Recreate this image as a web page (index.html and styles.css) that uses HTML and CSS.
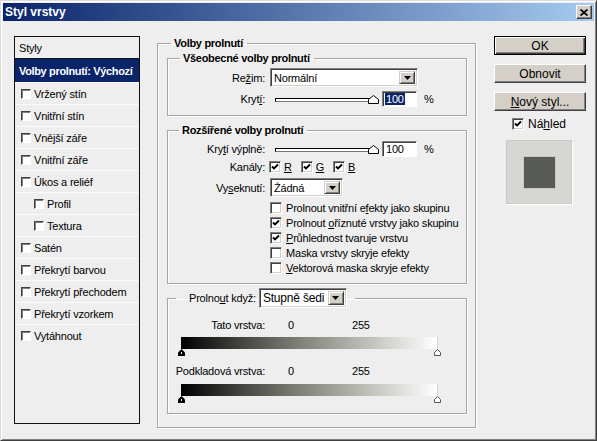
FILE: index.html
```html
<!DOCTYPE html>
<html lang="cs">
<head>
<meta charset="utf-8">
<title>Styl vrstvy</title>
<link rel="stylesheet" href="styles.css">
</head>
<body>
<div class="window">
  <div class="titlebar">
    <span class="title">Styl vrstvy</span>
    <span class="close"><svg width="8" height="7" viewBox="0 0 8 7"><path d="M0.5 0.5L7.5 6.5M7.5 0.5L0.5 6.5" stroke="#000" stroke-width="1.8" fill="none"/></svg></span>
  </div>
  <div class="body">
    <div class="list">
      <div class="lhead">Styly</div>
      <div class="lsel">Volby prolnutí: Výchozí</div>
      <div class="litem"><span class="lcb"></span><span>Vržený stín</span></div>
      <div class="litem"><span class="lcb"></span><span>Vnitřní stín</span></div>
      <div class="litem"><span class="lcb"></span><span>Vnější záře</span></div>
      <div class="litem"><span class="lcb"></span><span>Vnitřní záře</span></div>
      <div class="litem"><span class="lcb"></span><span>Úkos a reliéf</span></div>
      <div class="litem sub"><span class="lcb"></span><span>Profil</span></div>
      <div class="litem sub"><span class="lcb"></span><span>Textura</span></div>
      <div class="litem"><span class="lcb"></span><span>Satén</span></div>
      <div class="litem"><span class="lcb"></span><span>Překrytí barvou</span></div>
      <div class="litem"><span class="lcb"></span><span>Překrytí přechodem</span></div>
      <div class="litem"><span class="lcb"></span><span>Překrytí vzorkem</span></div>
      <div class="litem"><span class="lcb"></span><span>Vytáhnout</span></div>
    </div>

    <fieldset class="grp outer">
      <legend class="lg-outer">Volby prolnutí</legend>
      <div class="outer-in">
        <fieldset class="grp g1">
          <legend class="lg-1">Všeobecné volby prolnutí</legend>
          <div class="frow r-mode">
            <span class="lbl">Re<u>ž</u>im:</span>
            <div class="select s-mode"><span class="val">Normální</span><span class="arrow"><svg width="7" height="4" viewBox="0 0 7 4"><path d="M0 0H7L3.5 4Z"/></svg></span></div>
          </div>
          <div class="frow r-num">
            <span class="lbl">Kryt<u>í</u>:</span>
            <div class="slider"><div class="track"></div><svg class="thumb" width="11" height="9" viewBox="0 0 11 9"><path d="M0.5 8.5V4.5L5.5 0.5L10.5 4.5V8.5Z" fill="#fff" stroke="#000"/></svg></div>
            <div class="num sel"><span>100</span></div>
            <span class="pct">%</span>
          </div>
        </fieldset>

        <fieldset class="grp g2">
          <legend class="lg-2">Rozšířené volby prolnutí</legend>
          <div class="frow r-num r-fill">
            <span class="lbl">Kry<u>t</u>í výplně:</span>
            <div class="slider"><div class="track"></div><svg class="thumb" width="11" height="9" viewBox="0 0 11 9"><path d="M0.5 8.5V4.5L5.5 0.5L10.5 4.5V8.5Z" fill="#fff" stroke="#000"/></svg></div>
            <div class="num"><span>100</span></div>
            <span class="pct">%</span>
          </div>
          <div class="frow r-ch">
            <span class="lbl">Kanály:</span>
            <div class="chans">
              <span class="cb on"><svg width="8" height="8" viewBox="0 0 8 8"><path d="M1 3.5L3 5.5L7 1.5" stroke="#000" stroke-width="1.9" fill="none"/></svg></span><u class="ch">R</u>
              <span class="cb on"><svg width="8" height="8" viewBox="0 0 8 8"><path d="M1 3.5L3 5.5L7 1.5" stroke="#000" stroke-width="1.9" fill="none"/></svg></span><u class="ch">G</u>
              <span class="cb on"><svg width="8" height="8" viewBox="0 0 8 8"><path d="M1 3.5L3 5.5L7 1.5" stroke="#000" stroke-width="1.9" fill="none"/></svg></span><u class="ch">B</u>
            </div>
          </div>
          <div class="frow r-knock">
            <span class="lbl">Vy<u>s</u>eknutí:</span>
            <div class="select s-knock"><span class="val">Žádná</span><span class="arrow"><svg width="7" height="4" viewBox="0 0 7 4"><path d="M0 0H7L3.5 4Z"/></svg></span></div>
          </div>
          <div class="opts">
            <div class="opt"><span class="cb"></span><span>Prolnout vnitřní e<u>f</u>ekty jako skupinu</span></div>
            <div class="opt"><span class="cb on"><svg width="8" height="8" viewBox="0 0 8 8"><path d="M1 3.5L3 5.5L7 1.5" stroke="#000" stroke-width="1.9" fill="none"/></svg></span><span>Prolnout <u>o</u>říznuté vrstvy jako skupinu</span></div>
            <div class="opt"><span class="cb on"><svg width="8" height="8" viewBox="0 0 8 8"><path d="M1 3.5L3 5.5L7 1.5" stroke="#000" stroke-width="1.9" fill="none"/></svg></span><span><u>P</u>růhlednost tvaruje vrstvu</span></div>
            <div class="opt"><span class="cb"></span><span>Maska vrstvy skryje efekty</span></div>
            <div class="opt"><span class="cb"></span><span><u>V</u>ektorová maska skryje efekty</span></div>
          </div>
        </fieldset>

        <fieldset class="grp g3">
          <legend class="lg-3"><span class="lg3-in"><span class="lg3-lbl">Prolno<u>u</u>t když:</span><span class="select s-if"><span class="val">Stupně šedi</span><span class="arrow"><svg width="7" height="4" viewBox="0 0 7 4"><path d="M0 0H7L3.5 4Z"/></svg></span></span></span></legend>
          <div class="grow g-first">
            <span class="lbl">Tato vrstva:</span><span class="v0">0</span><span>255</span>
          </div>
          <div class="gbar"></div>
          <div class="gthumbs">
            <svg width="7" height="7" viewBox="0 0 7 7"><path d="M3.5 0L7 3.5V7H0V3.5Z"/><rect x="3" y="3" width="1" height="2" fill="#fff"/></svg>
            <svg width="7" height="7" viewBox="0 0 7 7"><path d="M3.5 0.5L6.5 3.5V6.5H0.5V3.5Z" fill="#fff" stroke="#555"/></svg>
          </div>
          <div class="grow g-second">
            <span class="lbl">Podkladová vrstva:</span><span class="v0">0</span><span>255</span>
          </div>
          <div class="gbar gbar2"></div>
          <div class="gthumbs">
            <svg width="7" height="7" viewBox="0 0 7 7"><path d="M3.5 0L7 3.5V7H0V3.5Z"/><rect x="3" y="3" width="1" height="2" fill="#fff"/></svg>
            <svg width="7" height="7" viewBox="0 0 7 7"><path d="M3.5 0.5L6.5 3.5V6.5H0.5V3.5Z" fill="#fff" stroke="#555"/></svg>
          </div>
        </fieldset>
      </div>
    </fieldset>

    <div class="side">
      <div class="btn def">OK</div>
      <div class="btn">Obnovit</div>
      <div class="btn"><span><u>N</u>ový styl...</span></div>
      <div class="prevchk"><span class="cb on"><svg width="8" height="8" viewBox="0 0 8 8"><path d="M1 3.5L3 5.5L7 1.5" stroke="#000" stroke-width="1.9" fill="none"/></svg></span><span class="pl">Ná<u>h</u>led</span></div>
      <div class="preview"><div class="sq"></div></div>
    </div>
  </div>
</div>
</body>
</html>
```
FILE: styles.css
```css
* { box-sizing: border-box; }
html, body { margin: 0; padding: 0; }
body {
  background: #eeeeee;
  font-family: "Liberation Sans", Arial, sans-serif;
  font-size: 11px;
  letter-spacing: -0.2px;
  color: #000;
}
u { text-decoration: underline; text-underline-offset: 1px; }

.window {
  width: 597px;
  height: 441px;
  border: 1px solid;
  border-color: #dcdcdc #404040 #404040 #dcdcdc;
  box-shadow: inset 1px 1px 0 #fff, inset -1px -1px 0 #808080;
  padding: 2px;
  background: #eeeeee;
  display: flex;
  flex-direction: column;
  overflow: hidden;
}

.titlebar {
  height: 18px;
  flex: none;
  display: flex;
  align-items: center;
  background: linear-gradient(to right, #0a246a, #a6caf0);
  padding: 0 2px 0 2px;
}
.title { color: #fff; font-weight: bold; font-size: 12px; letter-spacing: 0; }
.close {
  margin-left: auto;
  width: 16px;
  height: 14px;
  background: #d4d0c8;
  border: 1px solid;
  border-color: #fff #404040 #404040 #fff;
  box-shadow: inset -1px -1px 0 #808080;
  display: flex;
  align-items: center;
  justify-content: center;
}

.body {
  flex: 1;
  display: flex;
  align-items: flex-start;
  padding: 15px 0 0 11px;
}

/* left style list */
.list {
  width: 126px;
  height: 388px;
  border: 1px solid #111;
  flex: none;
}
.lhead {
  height: 22px;
  border-bottom: 1px solid #111;
  display: flex;
  align-items: center;
  padding-left: 4px;
}
.lsel {
  height: 23px;
  display: flex;
  align-items: center;
  padding-left: 4px;
  background: #0a246a;
  color: #fff;
  font-weight: bold;
  letter-spacing: -0.35px;
  white-space: nowrap;
}
.litem {
  height: 22px;
  border-top: 1px solid #fbfbfb;
  display: flex;
  align-items: center;
  padding-left: 6px;
  white-space: nowrap;
}
.litem.sub { padding-left: 19px; }
.lcb {
  width: 10px;
  height: 10px;
  margin-right: 3px;
  background: #fff;
  border: 1px solid;
  border-color: #404040 #fff #fff #404040;
  box-shadow: inset 1px 1px 0 #808080;
  flex: none;
}

/* group boxes */
fieldset.grp {
  margin: 0;
  padding: 0;
  min-width: 0;
  border: 1px solid #a5a5a5;
  box-shadow: 1px 1px 0 #fff, inset 1px 1px 0 #fff;
}
fieldset.grp > legend {
  font-weight: bold;
  letter-spacing: -0.3px;
  line-height: 13px;
  padding: 0 4px 0 3px;
  white-space: nowrap;
}
fieldset.outer {
  width: 319px;
  margin: 1px 0 0 17px;
  flex: none;
}
.lg-outer { margin-left: 13px; }
.outer-in { padding: 0 8px 13px 9px; }

fieldset.g1 { margin-top: 2px; padding-bottom: 8px; }
.lg-1 { margin-left: 12px; }
fieldset.g2 { margin-top: 8px; padding-bottom: 8px; }
.lg-2 { margin-left: 11px; }
fieldset.g3 { margin-top: 4px; padding-bottom: 10px; }
fieldset.grp > legend.lg-3 { margin-left: 8px; padding: 0 8px 0 13px; font-weight: normal; letter-spacing: -0.2px; }
.lg3-in { display: flex; align-items: center; gap: 3px; }

.frow { display: flex; align-items: center; }
.lbl {
  width: 97px;
  text-align: right;
  flex: none;
  white-space: nowrap;
}
.r-mode { margin-top: 3px; height: 19px; }
.r-mode .select { margin-left: 5px; width: 148px; }
.r-num { margin-top: 4px; height: 16px; }
.r-ch { margin-top: 3px; height: 14px; }
.r-knock { margin-top: 4px; height: 19px; }
.r-knock .select { margin-left: 5px; width: 73px; }

.select {
  display: flex;
  align-items: stretch;
  height: 19px;
  background: #fff;
  border: 1px solid;
  border-color: #808080 #fff #fff #808080;
  box-shadow: inset 1px 1px 0 #404040, inset -1px -1px 0 #d4d0c8;
  padding: 2px;
}
.select .val { flex: 1; display: flex; align-items: center; padding-left: 1px; white-space: nowrap; }
.arrow {
  width: 16px;
  flex: none;
  background: #d4d0c8;
  border: 1px solid;
  border-color: #d4d0c8 #404040 #404040 #d4d0c8;
  box-shadow: inset 1px 1px 0 #fff, inset -1px -1px 0 #808080;
  display: flex;
  align-items: center;
  justify-content: center;
}
.s-if { width: 88px; height: 20px; font-weight: normal; font-size: 12px; letter-spacing: -0.2px; }

.slider {
  position: relative;
  width: 107px;
  height: 16px;
  margin-left: 10px;
  display: flex;
  align-items: center;
}
.track {
  width: 102px;
  height: 4px;
  margin-top: 2px;
  background: #fff;
  border: 1px solid #000;
  border-bottom-color: #777;
}
.thumb { position: absolute; left: 93px; top: 4px; }

.num {
  width: 35px;
  height: 16px;
  background: #fff;
  border: 1px solid;
  border-color: #808080 #fff #fff #808080;
  box-shadow: inset 1px 1px 0 #404040;
  display: flex;
  align-items: center;
  padding-left: 3px;
}
.num.sel span { background: #0a246a; color: #fff; padding: 0 1px; margin-left: -1px; }
.pct { margin-left: 7px; }

.chans { display: flex; align-items: center; margin-left: 4px; }
.ch { margin: 0 9px 0 3px; }

.cb {
  width: 12px;
  height: 12px;
  flex: none;
  background: #fff;
  border: 1px solid;
  border-color: #808080 #fff #fff #808080;
  box-shadow: inset 1px 1px 0 #404040, inset -1px -1px 0 #d4d0c8;
  display: flex;
  align-items: center;
  justify-content: center;
}

.opts { margin-top: 3px; padding-left: 102px; }
.opt { height: 15px; display: flex; align-items: center; white-space: nowrap; }
.opt .cb { margin-right: 4px; }

.grow { display: flex; align-items: center; height: 14px; }
.g-first { margin-top: 10px; }
.g-second { margin-top: 8px; }
.v0 { margin-left: 23px; width: 64px; }
.gbar {
  margin: 5px 0 0 13px;
  width: 257px;
  height: 12px;
  background: linear-gradient(to right, #000 0%, #3a3a37 20%, #7d7d76 45%, #b9b9b3 70%, #fff 100%);
  border-right: 1px solid #d8d8d8;
}
.gbar2 { margin-top: 6px; }
.gthumbs {
  margin-left: 10px;
  width: 263px;
  height: 7px;
  display: flex;
  justify-content: space-between;
}
.gthumbs svg { display: block; }

/* right column */
.side {
  width: 92px;
  margin-left: 18px;
  flex: none;
  display: flex;
  flex-direction: column;
}
.btn {
  height: 19px;
  margin-bottom: 9px;
  background: #d4d0c8;
  border: 1px solid;
  border-color: #fff #404040 #404040 #fff;
  box-shadow: inset -1px -1px 0 #808080;
  display: flex;
  align-items: center;
  justify-content: center;
  font-size: 12px;
  letter-spacing: 0;
}
.btn.def {
  border-color: #000;
  box-shadow: inset 1px 1px 0 #fff, inset -1px -1px 0 #404040, inset -2px -2px 0 #808080;
}
.prevchk {
  margin-top: -3px;
  height: 14px;
  display: flex;
  align-items: center;
  padding-left: 18px;
  font-size: 12px;
  letter-spacing: 0;
}
.prevchk .cb { margin-right: 4px; }
.preview {
  margin: 9px 0 0 12px;
  width: 66px;
  height: 64px;
  background: #d6d6d2;
  border: 1px solid #cacac6;
  box-shadow: 1px 1px 0 #fff;
  display: flex;
  align-items: center;
  justify-content: center;
}
.sq {
  width: 31px;
  height: 31px;
  background: #575a56;
  box-shadow: 0 0 0 1px #c8c9c5;
}
```
